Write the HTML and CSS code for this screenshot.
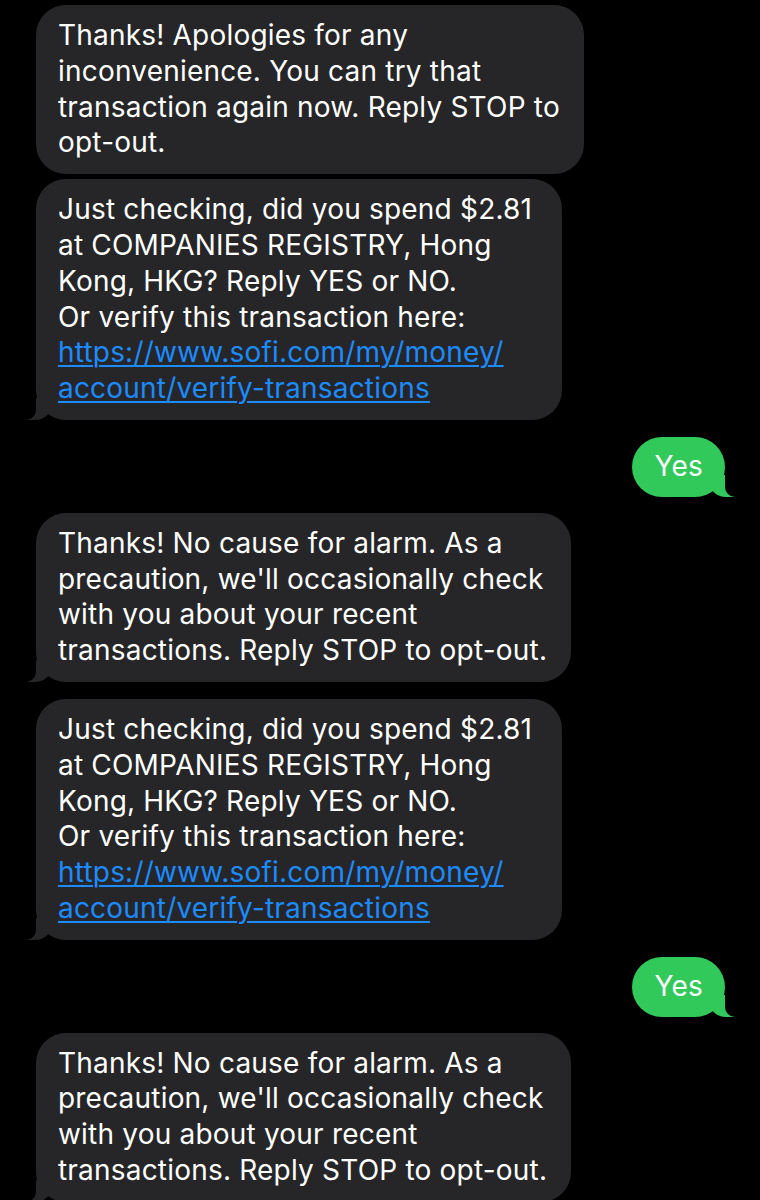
FILE: index.html
```html
<!DOCTYPE html>
<html lang="en">
<head>
<meta charset="utf-8">
<title>Messages</title>
<link rel="stylesheet" href="styles.css">
</head>
<body>
<main class="thread">
  <div class="msg them">Thanks! Apologies for any<br>inconvenience. You can try that<br>transaction again now. Reply STOP to<br>opt-out.</div>
  <div class="msg them tight tail wide">Just checking, did you spend $2.81<br>at COMPANIES REGISTRY, Hong<br>Kong, HKG? Reply YES or NO.<br>Or verify this transaction here:<br><a class="link" href="#">https://www.sofi.com/my/money/<br>account/verify-transactions</a></div>
  <div class="msg me tail">Yes</div>
  <div class="msg them tail">Thanks! No cause for alarm. As a<br>precaution, we'll occasionally check<br>with you about your recent<br>transactions. Reply STOP to opt-out.</div>
  <div class="msg them tail wide">Just checking, did you spend $2.81<br>at COMPANIES REGISTRY, Hong<br>Kong, HKG? Reply YES or NO.<br>Or verify this transaction here:<br><a class="link" href="#">https://www.sofi.com/my/money/<br>account/verify-transactions</a></div>
  <div class="msg me tail">Yes</div>
  <div class="msg them tail">Thanks! No cause for alarm. As a<br>precaution, we'll occasionally check<br>with you about your recent<br>transactions. Reply STOP to opt-out.</div>
</main>
</body>
</html>
```

FILE: styles.css
```css
html, body {
  margin: 0;
  padding: 0;
  background: #000;
}

body {
  font-family: Inter, "Noto Sans", "Liberation Sans", sans-serif;
  color: #fff;
  overflow: hidden;
}

.thread {
  display: flex;
  flex-direction: column;
  padding-top: 5px;
}

.msg {
  position: relative;
  width: fit-content;
  white-space: nowrap;
  font-size: 28px;
  line-height: 35.8px;
  letter-spacing: 0.2px;
  padding: 13px 24px 13px 22px;
  border-radius: 30px;
  margin-top: 17px;
}

.msg:first-child {
  margin-top: 0;
}

.msg.tight {
  margin-top: 5px;
}

.msg.wide {
  padding-right: 30px;
}

.them {
  align-self: flex-start;
  margin-left: 36px;
  background: #262628;
}

.me {
  align-self: flex-end;
  margin-right: 35px;
  background: #31c95a;
  padding: 12px 22px;
  margin-top: 17px;
}

.me + .them {
  margin-top: 16px;
}

.link {
  color: #1c8bff;
  text-decoration: underline;
  text-decoration-thickness: 1.5px;
  text-underline-offset: 3px;
}

/* bubble tails */
.them.tail::before,
.them.tail::after,
.me.tail::before,
.me.tail::after {
  content: "";
  position: absolute;
  bottom: 0;
  height: 22px;
}

.them.tail::before {
  left: -9px;
  width: 24px;
  background: #262628;
  border-bottom-right-radius: 16px 14px;
}

.them.tail::after {
  left: -12px;
  width: 12px;
  background: #000;
  border-bottom-right-radius: 10px;
}

.me.tail::before {
  right: -9px;
  width: 24px;
  background: #31c95a;
  border-bottom-left-radius: 16px 14px;
}

.me.tail::after {
  right: -12px;
  width: 12px;
  background: #000;
  border-bottom-left-radius: 10px;
}
```
